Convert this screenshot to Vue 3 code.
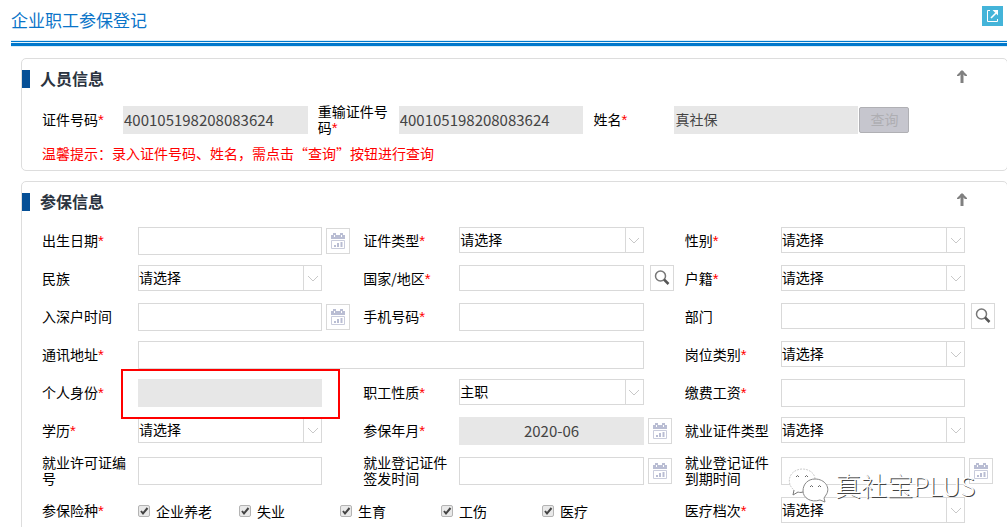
<script setup>
import { reactive } from 'vue'

const idFields = [
  { id: 'cert-no', label: '证件号码', value: '400105198208083624' },
  { id: 'cert-no-again', label: '重输证件号码', value: '400105198208083624' },
  { id: 'person-name', label: '姓名', value: '真社保', query: true },
]

const pick = '请选择'
const fields = reactive([
  { id: 'birth', label: '出生日期', req: true, type: 'date', value: '' },
  { id: 'cert-type', label: '证件类型', req: true, type: 'select', value: pick },
  { id: 'gender', label: '性别', req: true, type: 'select', value: pick },
  { id: 'nation', label: '民族', type: 'select', value: pick },
  { id: 'country', label: '国家/地区', req: true, type: 'search', value: '' },
  { id: 'household', label: '户籍', req: true, type: 'select', value: pick },
  { id: 'settle', label: '入深户时间', type: 'date', value: '' },
  { id: 'mobile', label: '手机号码', req: true, type: 'text', value: '' },
  { id: 'dept', label: '部门', type: 'search', value: '' },
  { id: 'address', label: '通讯地址', req: true, type: 'text', wide: true, value: '' },
  { id: 'post', label: '岗位类别', req: true, type: 'select', value: pick },
  { id: 'identity', label: '个人身份', req: true, type: 'text', disabled: true, marked: true, value: '' },
  { id: 'job-kind', label: '职工性质', req: true, type: 'select', value: '主职' },
  { id: 'wage', label: '缴费工资', req: true, type: 'text', value: '' },
  { id: 'education', label: '学历', req: true, type: 'select', value: pick },
  { id: 'month', label: '参保年月', req: true, type: 'date', disabled: true, value: '2020-06' },
  { id: 'job-cert', label: '就业证件类型', type: 'select', value: pick },
  { id: 'permit', label: '就业许可证编号', type: 'text', value: '' },
  { id: 'issue', label: '就业登记证件签发时间', type: 'date', value: '' },
  { id: 'expire', label: '就业登记证件到期时间', type: 'date', value: '' },
  { id: 'kinds', label: '参保险种', req: true, type: 'checks', wide: true },
  { id: 'medical', label: '医疗档次', req: true, type: 'select', value: pick },
])

const kinds = reactive([
  { name: '企业养老', on: true },
  { name: '失业', on: true },
  { name: '生育', on: true },
  { name: '工伤', on: true },
  { name: '医疗', on: true },
])
</script>

<template>
  <main class="page" lang="zh-CN">
    <header class="top">
      <h1>企业职工参保登记</h1>
      <button type="button" class="popout" aria-label="新窗口打开">
        <svg width="21" height="20" viewBox="0 0 21 20" fill="none">
          <path d="M8 4.500H5.500V15.500H15.500V13" stroke="#fff" />
          <path d="M9 12L14 7" stroke="#fff" stroke-width="1.600" />
          <path d="M10.500 4H16V9.500Z" fill="#fff" />
        </svg>
      </button>
    </header>
    <div class="rule"></div>

    <section class="panel">
      <div class="panel-head">
        <h2>人员信息</h2>
        <button type="button" class="fold" aria-label="收起">
          <svg width="10" height="13" viewBox="0 0 10 13"><path d="M5 1V13" stroke="#808080" stroke-width="3" /><path d="M5 0L10 5V6H8L5 3.500L2 6H0V5Z" fill="#808080" /></svg>
        </button>
      </div>
      <div class="id-grid">
        <div v-for="f in idFields" :key="f.id" class="id-cell">
          <label :for="f.id">{{ f.label }}<i>*</i></label>
          <input :id="f.id" type="text" :value="f.value" disabled :class="{ name: f.query }" />
          <button v-if="f.query" type="button" class="query" disabled>查询</button>
        </div>
      </div>
      <p class="tip">温馨提示：录入证件号码、姓名，需点击“查询”按钮进行查询</p>
    </section>

    <section class="panel">
      <div class="panel-head">
        <h2>参保信息</h2>
        <button type="button" class="fold" aria-label="收起">
          <svg width="10" height="13" viewBox="0 0 10 13"><path d="M5 1V13" stroke="#808080" stroke-width="3" /><path d="M5 0L10 5V6H8L5 3.500L2 6H0V5Z" fill="#808080" /></svg>
        </button>
      </div>
      <div class="grid">
        <div v-for="f in fields" :key="f.id" class="cell" :class="{ wide: f.wide }">
          <span v-if="f.type === 'checks'" :id="f.id" class="label">{{ f.label }}<i>*</i></span>
          <label v-else :for="f.id" class="label">{{ f.label }}<i v-if="f.req">*</i></label>

          <div v-if="f.type === 'checks'" class="checks" role="group" :aria-labelledby="f.id">
            <label v-for="k in kinds" :key="k.name" class="check">
              <span class="box">
                <input v-model="k.on" type="checkbox" />
                <svg v-if="k.on" width="12" height="12" viewBox="0 0 12 12" fill="none"><path d="M3 6L5 8.500L9.500 3" stroke="#444" stroke-width="2" /></svg>
              </span>
              {{ k.name }}
            </label>
          </div>

          <div v-else class="control">
            <template v-if="f.type === 'select'">
              <select :id="f.id" v-model="f.value">
                <option>{{ f.value }}</option>
              </select>
              <span class="caret">
                <svg width="12" height="7" viewBox="0 0 12 7" fill="none"><path d="M1 1L6 6L11 1" stroke="#c8c8c8" /></svg>
              </span>
            </template>
            <input v-else :id="f.id" v-model="f.value" type="text" :disabled="f.disabled" :class="f.type" />
            <span v-if="f.marked" class="mark"></span>
          </div>

          <button v-if="f.type === 'date'" type="button" class="addon cal" aria-label="选择日期">
            <svg width="14" height="16" viewBox="0 0 14 16" fill="none">
              <path d="M0 2H2V0H5V2H9V0H12V2H14V6H0Z" fill="#b9bdd3" />
              <path d="M3 2H4V4H3ZM10 2H11V4H10Z" fill="#fff" />
              <path d="M0.500 7.500H13.500V15.500H0.500Z" stroke="#c9ccdc" />
              <path d="M4 12V14M7 10V14M10.500 9V14" stroke="#b9bdd3" stroke-width="2" />
            </svg>
          </button>
          <button v-if="f.type === 'search'" type="button" class="addon find" aria-label="查找">
            <svg width="16" height="16" viewBox="0 0 16 16" fill="none">
              <circle cx="6.500" cy="6" r="5" stroke="#777" stroke-width="1.500" />
              <path d="M10 9.500L14.500 14" stroke="#555" stroke-width="2.500" />
            </svg>
          </button>
        </div>
      </div>
    </section>

    <div class="watermark">
      <svg width="42" height="36" viewBox="0 0 42 36" fill="none">
        <path d="M15 25C12 26 10 25 10 25L5 28L6 23C-2 17 0 3 14 2C22 2 27 7 27 12C18 12 14 20 15 25Z" fill="#fff" />
        <path d="M27 12C27 7 22 2 14 2C0 3 -2 17 6 23" stroke="#ccc" stroke-dasharray="2 1" />
        <path d="M6 23L5 28L10 25C10 25 12 26 15 25" stroke="#777" />
        <path d="M27 12C37 12 43 21 38 28L36 31L37 35L32 33C23 36 15 31 15 24C15 17 20 12 27 12Z" fill="#fff" stroke="#888" />
        <path d="M8 10Q9.500 7 11 10M17 10Q18.500 7 20 10M22 20Q23.500 17 25 20M30 20Q31.500 17 33 20" stroke="#666" />
      </svg>
      <span>真社宝PLUS</span>
    </div>
  </main>
</template>

<style>
body {
  overflow: hidden;
  background: #fff;
}
</style>

<style scoped>
.page {
  position: relative;
  height: calc(100vh - 4px);
  padding-left: 11px;
  font: 14px/16px "Noto Sans CJK SC", "Noto Sans", sans-serif;
  color: #000;
  overflow: hidden;
}
* {
  box-sizing: border-box;
}
h1,
h2,
p {
  margin: 0;
}
button,
input,
select {
  margin: 0;
  padding: 0;
  font: inherit;
  border-radius: 0;
}
i {
  font-family: "Liberation Sans", sans-serif;
  font-size: 15px;
  font-style: normal;
  line-height: 12px;
  color: #f00;
}
.top {
  display: flex;
  align-items: flex-start;
  justify-content: space-between;
  height: 40px;
  padding: 6px 4px 0 0;
}
h1 {
  font-size: 17px;
  line-height: 28px;
  font-weight: 400;
  color: #0a74c8;
}
.popout {
  display: flex;
  border: 0;
  background: #44b4d9;
}
.rule {
  height: 7px;
  border-top: 1px solid #d9eefa;
  border-bottom: 1px solid #d9eefa;
  background: linear-gradient(#0078cc 1px, #e6f4fc 1px, #e6f4fc 2px, #0078cc 2px);
}
.panel {
  margin: 11px -1px 10px 10px;
  padding: 11px 0 8px;
  border: 1px solid #ddd;
  border-radius: 5px;
}
.panel + .panel {
  margin-top: 10px;
}
.panel-head {
  display: flex;
  align-items: flex-start;
  justify-content: space-between;
  height: 18px;
  margin-bottom: 16px;
  padding-right: 40px;
}
h2 {
  padding-left: 10px;
  border-left: 8px solid #054f96;
  font-size: 16px;
  line-height: 16px;
  padding-bottom: 2px;
  font-weight: 700;
  color: #2b3440;
}
.fold {
  display: flex;
  border: 0;
  background: none;
}
.id-grid {
  display: grid;
  grid-template-columns: 2fr 2fr 3fr;
  padding-left: 20px;
}
.id-cell {
  display: flex;
  align-items: center;
  height: 32px;
}
.id-cell label {
  flex: 0 0 81px;
  padding: 0 10px 2px 0;
}
.id-cell input {
  flex: 1;
  min-width: 0;
  margin-right: 10px;
}
.id-cell .name {
  flex: 0 0 184px;
  margin-right: 1px;
  font-size: 14px;
}
.query {
  width: 50px;
  height: 26px;
  border: 1px solid #b0b0b4;
  border-radius: 2px;
  background: #c6c6ce;
  color: #aeaeb2;
  line-height: 20px;
  padding-bottom: 3px;
}
.tip {
  margin: 9px 0 1px;
  padding-left: 20px;
  color: #f00;
}
input[type="text"] {
  width: 100%;
  height: 28px;
  padding: 0 0 2px;
  border: 1px solid #d9d9d9;
  background: #fff;
  font-size: 15px;
  color: #444;
}
input[type="text"]:disabled {
  border-color: #e7e7e7;
  background: #e7e7e7;
}
input.search[type="text"] {
  height: 26px;
}
input.date {
  text-align: center;
}
.grid {
  display: grid;
  grid-template-columns: repeat(3, minmax(0, 1fr));
  row-gap: 10px;
  padding: 0 1px 0 20px;
}
.cell {
  display: grid;
  grid-template-columns: 96px minmax(0, 1fr) 41px;
  align-items: center;
  min-height: 28px;
}
.wide {
  grid-column: span 2;
}
.label {
  margin: -1px 0;
  padding: 0 10px 2px 0;
}
.control {
  position: relative;
  display: flex;
  align-items: flex-start;
  height: 28px;
}
select {
  width: 100%;
  height: 26px;
  padding: 0 20px 2px 0;
  border: 1px solid #d9d9d9;
  background: #fff;
  color: #000;
  appearance: none;
}
.caret {
  position: absolute;
  top: 0;
  right: 0;
  display: flex;
  align-items: center;
  justify-content: center;
  width: 19px;
  height: 26px;
  border: 1px solid #d9d9d9;
  pointer-events: none;
}
.mark {
  position: absolute;
  z-index: 1;
  inset: -10px -18px -12px -17px;
  border: 2px solid #f00;
  pointer-events: none;
}
.addon {
  display: flex;
  align-items: center;
  justify-content: center;
  width: 24px;
  height: 26px;
  border: 1px solid #d9d9d9;
  background: #fff;
}
.cal {
  margin-left: 4px;
}
.find {
  align-self: start;
  margin-left: 6px;
}
.checks {
  display: flex;
}
.check {
  display: flex;
  align-items: center;
  flex: 0 0 101px;
  gap: 6px;
}
.box {
  position: relative;
  display: flex;
}
.box input {
  width: 12px;
  height: 12px;
  border: 1px solid #b4b4b4;
  border-radius: 2px;
  background: #e9e9e9;
  appearance: none;
}
.box svg {
  position: absolute;
  top: 0;
  left: 0;
  pointer-events: none;
}
.watermark {
  position: absolute;
  z-index: 2;
  top: 467px;
  right: 32px;
  display: flex;
  gap: 5px;
  font-size: 26px;
  line-height: 36px;
  font-weight: 300;
  color: #fff;
  text-shadow: 1px 1px 0 #444;
  pointer-events: none;
}
</style>
